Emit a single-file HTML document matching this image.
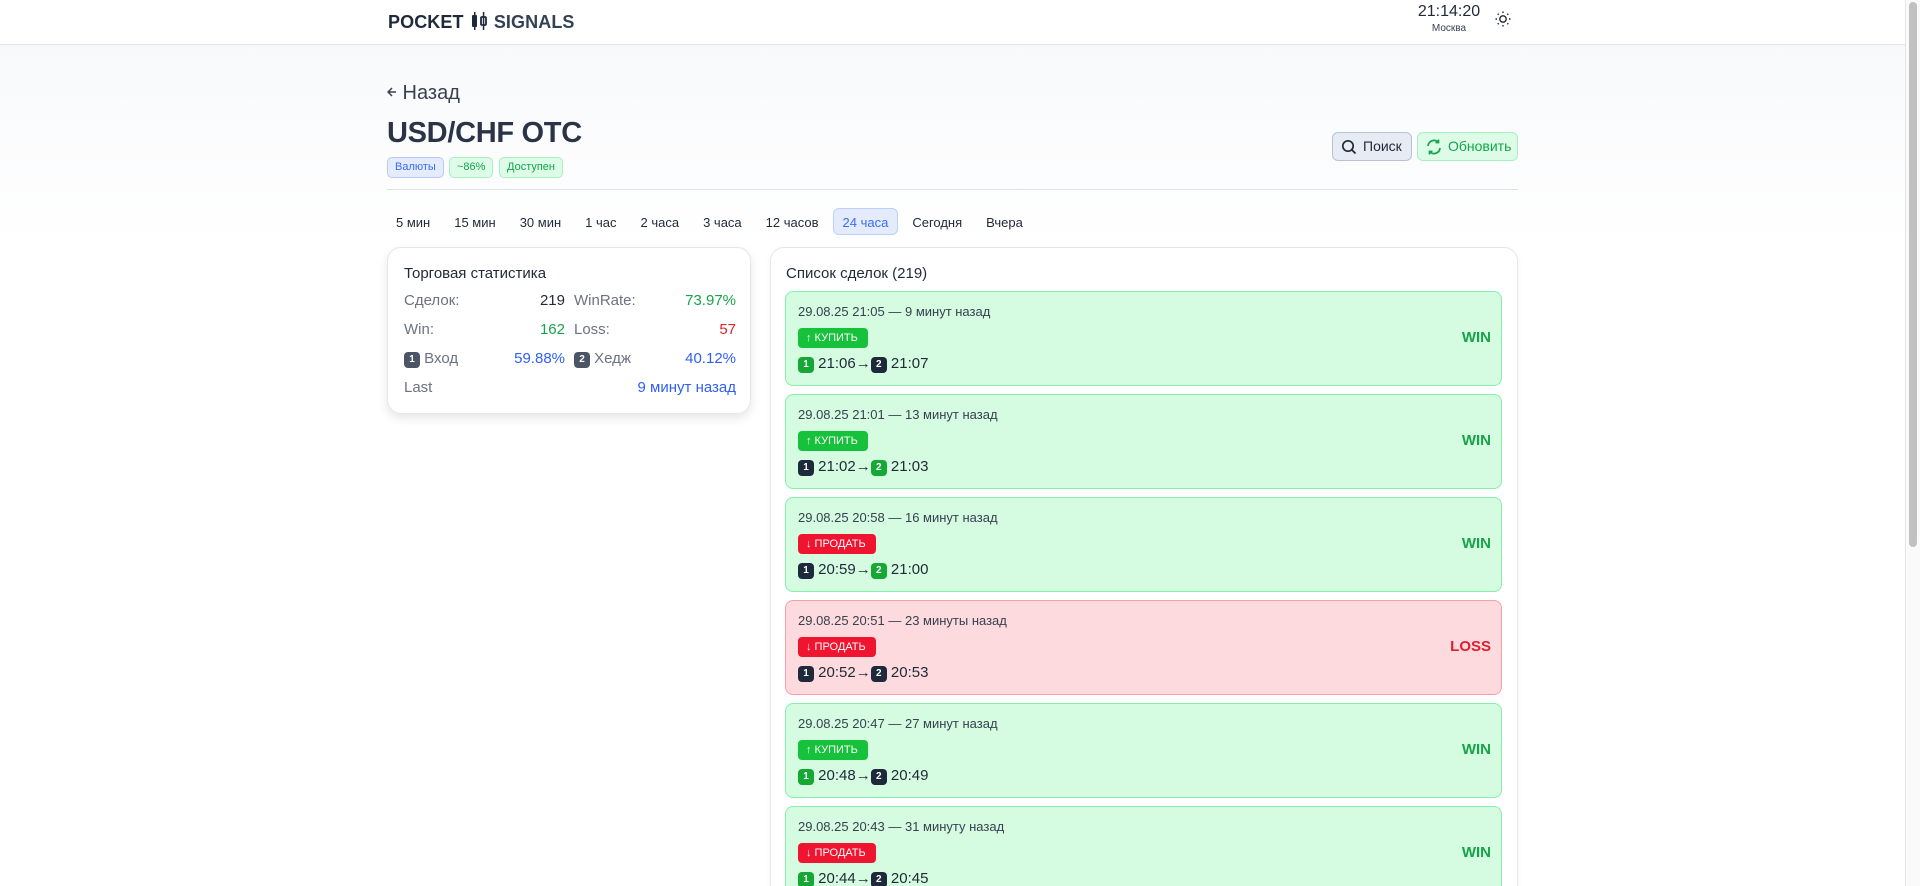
<!DOCTYPE html>
<html style="overflow:hidden"><head><meta charset="utf-8"><style>
*{box-sizing:border-box;margin:0;padding:0}
html,body{width:1920px;height:886px;overflow:hidden}
body{font-family:"Liberation Sans","DejaVu Sans",sans-serif;color:#1f2937;background:#fff;position:relative}
#w{position:absolute;left:0;top:0;width:1920px;height:886px;overflow:hidden}
.hdr{position:absolute;left:0;top:0;width:1905px;height:45px;border-bottom:1px solid #e2e4e8;background:#fff}
.logo{position:absolute;left:388px;top:11px;font-size:18px;font-weight:bold;color:#1e293b;letter-spacing:.1px}
.logo span{color:#334155;font-weight:bold}
.clock{position:absolute;left:1416px;top:3px;text-align:center;width:66px}
.clock .t{font-size:16px;color:#1f2937}
.clock .c{font-size:10px;color:#374151;margin-top:2px}
.sb{position:absolute;left:1905px;top:0;width:15px;height:886px;background:#fafafa;border-left:1px solid #e5e5e5}
.sb div{position:absolute;left:3px;top:2px;width:8px;height:545px;background:#c1c1c1;border-radius:4px}
.main{position:absolute;left:0;top:45px;width:1905px;height:841px;background:linear-gradient(#f8f9fb,#fff 200px)}
.abs{position:absolute}
.back{left:387px;top:82px;font-size:20px;color:#374151}
.title{left:387px;top:117px;font-size:29px;font-weight:bold;color:#2a3446;letter-spacing:-.3px}
.badge{position:absolute;top:157px;height:21px;border-radius:5px;font-size:11px;line-height:19px;padding:0 7px;border:1px solid}
.divider{left:387px;top:189px;width:1131px;height:1px;background:#dcdfe4}
.btn{position:absolute;top:132px;height:29px;border-radius:6px;border:1px solid;font-size:14px;line-height:27px;padding-left:30px}
.tabs{left:386px;top:208px;height:27px;display:flex;font-size:13px;color:#1f2937}
.tabs div{padding:0 9px;line-height:27px;margin-right:4px;border-radius:6px;border:1px solid transparent}
.tabs .on{background:#e3ebfd;border-color:#bcd0fb;color:#3b6cf6}
.card{position:absolute;background:#fff;border:1px solid #e4e6ea;border-radius:14px}
.st{font-size:15px;color:#6b7280}
.num{display:inline-block;width:16px;height:16px;border-radius:4px;color:#fff;font-size:10px;font-weight:bold;text-align:center;line-height:16px;vertical-align:1px}
.item{position:absolute;left:785px;width:717px;height:95px;border-radius:8px;border:1px solid #86efac;background:#d5fbe1}
.item.l{background:#fddadd;border-color:#f9a0a6}
.item .d{position:absolute;left:12px;top:12px;font-size:13px;color:#374151}
.item .b{position:absolute;left:12px;top:36px;height:20px;border-radius:4px;color:#fff;font-size:11px;line-height:20px;padding:0 10px 0 8px}
.item .tm{position:absolute;left:12px;top:63px;font-size:15px;color:#1f2937}
.item .r{position:absolute;right:10px;top:37px;font-size:15px;font-weight:bold;color:#16a34a}
.item.l .r{color:#e11d2e}
</style></head><body><div id="w">
<div class="main"></div>
<div class="hdr">
<div class="logo">POCKET <svg width="20" height="20" viewBox="0 0 20 20" style="vertical-align:-3px"><rect x="3" y="4" width="5" height="12" rx="1" fill="#1e293b"/><rect x="5" y="1" width="1.5" height="18" fill="#1e293b"/><rect x="12" y="6" width="5" height="8" rx="1" fill="none" stroke="#1e293b" stroke-width="1.8"/><rect x="13.8" y="1" width="1.5" height="18" fill="#1e293b"/></svg> <span>SIGNALS</span></div>
<div class="clock"><div class="t">21:14:20</div><div class="c">Москва</div></div>
<svg class="abs" style="left:1494px;top:10px" width="18" height="18" viewBox="0 0 18 18" fill="none" stroke="#1f2937" stroke-width="1.4"><circle cx="9" cy="9" r="3.2"/><path d="M9 1.5v1.5M9 15v1.5M1.5 9h1.5M15 9h1.5M3.7 3.7l1 1M13.3 13.3l1 1M3.7 14.3l1-1M13.3 4.7l1-1"/></svg>
</div>
<div class="abs back"><svg width="10" height="12" viewBox="0 0 10 12" fill="none" stroke="#374151" stroke-width="1.5" style="vertical-align:1px"><path d="M9 6H1.5M5 2L1 6l4 4"/></svg> Назад</div>
<div class="abs title">USD/CHF OTC</div>
<div class="badge" style="left:387px;background:#e3ebfd;border-color:#b7cbfb;color:#3b6cf6">Валюты</div>
<div class="badge" style="left:449px;background:#dcfce7;border-color:#a7efc0;color:#16a34a">~86%</div>
<div class="badge" style="left:499px;background:#dcfce7;border-color:#a7efc0;color:#16a34a">Доступен</div>
<div class="btn" style="left:1332px;width:80px;background:#e6ebf4;border-color:#b8c2d6;color:#1f2937"><svg class="abs" style="left:8px;top:6px" width="16" height="16" viewBox="0 0 16 16" fill="none" stroke="#1f2937" stroke-width="1.7"><circle cx="7" cy="7" r="5.2"/><path d="M11 11l3.5 3.5"/></svg>Поиск</div>
<div class="btn" style="left:1417px;width:101px;background:#dcfce7;border-color:#a7efc0;color:#16a34a"><svg class="abs" style="left:7px;top:5px" width="18" height="18" viewBox="0 0 18 18" fill="none" stroke="#16a34a" stroke-width="1.7"><path d="M3 8a6 6 0 0 1 10.5-3.5M15 10a6 6 0 0 1-10.5 3.5M13.5 1.5v3h-3M4.5 16.5v-3h3"/></svg>Обновить</div>
<div class="abs divider"></div>
<div class="abs tabs"><div>5 мин</div><div>15 мин</div><div>30 мин</div><div>1 час</div><div>2 часа</div><div>3 часа</div><div>12 часов</div><div class="on">24 часа</div><div>Сегодня</div><div>Вчера</div></div>

<div class="card" style="left:387px;top:247px;width:364px;height:167px;box-shadow:0 4px 10px rgba(0,0,0,.1)">
<div class="abs" style="left:16px;top:17px;font-size:15px;color:#1f2937">Торговая статистика</div>
<div class="abs st" style="left:16px;top:44px">Сделок:</div><div class="abs" style="right:185px;top:44px;font-size:15px;color:#1f2937">219</div>
<div class="abs st" style="left:186px;top:44px">WinRate:</div><div class="abs" style="right:14px;top:44px;font-size:15px;color:#16a34a">73.97%</div>
<div class="abs st" style="left:16px;top:73px">Win:</div><div class="abs" style="right:185px;top:73px;font-size:15px;color:#16a34a">162</div>
<div class="abs st" style="left:186px;top:73px">Loss:</div><div class="abs" style="right:14px;top:73px;font-size:15px;color:#dc2626">57</div>
<div class="abs st" style="left:16px;top:102px"><span class="num" style="background:#4b5563">1</span> Вход</div><div class="abs" style="right:185px;top:102px;font-size:15px;color:#2f5ff5">59.88%</div>
<div class="abs st" style="left:186px;top:102px"><span class="num" style="background:#4b5563">2</span> Хедж</div><div class="abs" style="right:14px;top:102px;font-size:15px;color:#2f5ff5">40.12%</div>
<div class="abs st" style="left:16px;top:131px">Last</div><div class="abs" style="right:14px;top:131px;font-size:15px;color:#2f5ff5">9 минут назад</div>
</div>

<div class="card" style="left:770px;top:247px;width:748px;height:700px;box-shadow:0 2px 6px rgba(0,0,0,.05)">
<div class="abs" style="left:15px;top:17px;font-size:15px;color:#1f2937">Список сделок (219)</div>
</div>

<div class="item" style="top:291px"><div class="d">29.08.25 21:05 — 9 минут назад</div><div class="b" style="background:#16c23b">↑ КУПИТЬ</div><div class="tm"><span class="num" style="background:#15a834">1</span> 21:06→<span class="num" style="background:#1e293b">2</span> 21:07</div><div class="r">WIN</div></div>
<div class="item" style="top:394px"><div class="d">29.08.25 21:01 — 13 минут назад</div><div class="b" style="background:#16c23b">↑ КУПИТЬ</div><div class="tm"><span class="num" style="background:#1e293b">1</span> 21:02→<span class="num" style="background:#15a834">2</span> 21:03</div><div class="r">WIN</div></div>
<div class="item" style="top:497px"><div class="d">29.08.25 20:58 — 16 минут назад</div><div class="b" style="background:#ef1530">↓ ПРОДАТЬ</div><div class="tm"><span class="num" style="background:#1e293b">1</span> 20:59→<span class="num" style="background:#15a834">2</span> 21:00</div><div class="r">WIN</div></div>
<div class="item l" style="top:600px"><div class="d">29.08.25 20:51 — 23 минуты назад</div><div class="b" style="background:#ef1530">↓ ПРОДАТЬ</div><div class="tm"><span class="num" style="background:#1e293b">1</span> 20:52→<span class="num" style="background:#1e293b">2</span> 20:53</div><div class="r">LOSS</div></div>
<div class="item" style="top:703px"><div class="d">29.08.25 20:47 — 27 минут назад</div><div class="b" style="background:#16c23b">↑ КУПИТЬ</div><div class="tm"><span class="num" style="background:#15a834">1</span> 20:48→<span class="num" style="background:#1e293b">2</span> 20:49</div><div class="r">WIN</div></div>
<div class="item" style="top:806px"><div class="d">29.08.25 20:43 — 31 минуту назад</div><div class="b" style="background:#ef1530">↓ ПРОДАТЬ</div><div class="tm"><span class="num" style="background:#15a834">1</span> 20:44→<span class="num" style="background:#1e293b">2</span> 20:45</div><div class="r">WIN</div></div>
<div class="sb"><div></div></div>
</div></body></html>
